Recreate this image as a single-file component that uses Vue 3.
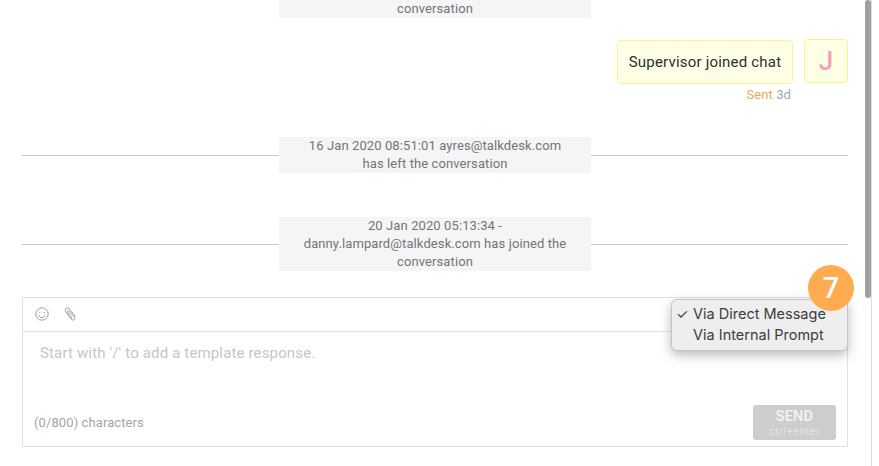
<script setup>
const notices = [
  { id: 1, lines: '16 Jan 2020 08:51:01 ayres@talkdesk.com has left the conversation' },
  { id: 2, lines: '20 Jan 2020 05:13:34 - danny.lampard@talkdesk.com has joined the conversation' }
]
</script>

<template>
  <div class="page">
    <main class="chat">
      <div class="feed">
        <div class="clip">
          <div class="notice first"><span class="notice-text">conversation</span></div>
        </div>

        <div class="message">
          <div class="message-body">
            <div class="bubble">Supervisor joined chat</div>
            <div class="meta"><span class="sent">Sent</span> <span class="age">3d</span></div>
          </div>
          <div class="avatar">J</div>
        </div>

        <div v-for="n in notices" :key="n.id" class="notice">
          <span class="notice-text">{{ n.lines }}</span>
        </div>
      </div>

      <section class="composer">
        <div class="toolbar">
          <svg class="icon" width="16" height="16" viewBox="0 0 16 16" fill="none" stroke="#999" stroke-width="1">
            <circle cx="8" cy="8" r="6.2" />
            <circle cx="5.8" cy="6.4" r="0.7" fill="#999" stroke="none" />
            <circle cx="10.2" cy="6.4" r="0.7" fill="#999" stroke="none" />
            <path d="M4.8 9.4c.7 1.5 1.9 2.2 3.2 2.2s2.5-.7 3.2-2.2" stroke-linecap="round" />
          </svg>
          <svg class="icon" width="16" height="16" viewBox="0 0 16 16" fill="none" stroke="#b5b5b5" stroke-width="1.1" stroke-linecap="round">
            <path d="M13.2 10.4 7.4 2.9c-.9-1.100-2.300-1.200-3.300-.4-1 .8-1.100 2.200-.3 3.300l5.700 7.400c.7.900 1.800 1 2.600.4.800-.6.900-1.700.2-2.600L7.200 5.300c-.4-.5-1-.6-1.500-.2-.5.4-.5 1-.1 1.500l4.300 5.600" />
          </svg>
        </div>
        <div class="editor">
          <div class="placeholder">Start with '/' to add a template response.</div>
          <div class="editor-foot">
            <span class="count">(0/800) characters</span>
            <button class="send" type="button" disabled>
              <span class="send-label">SEND</span>
              <span class="send-hint">ctrl+enter</span>
            </button>
          </div>
        </div>

        <div class="menu">
          <div class="menu-item"><span class="check">✓</span>Via Direct Message</div>
          <div class="menu-item"><span class="check"></span>Via Internal Prompt</div>
        </div>
        <div class="step">7</div>
      </section>
    </main>

    <div class="scrollbar"><div class="thumb"></div></div>
  </div>
</template>

<style scoped>
.page {
  display: flex;
  width: 879px;
  height: 466px;
  overflow: hidden;
  background: #fff;
  font-family: Roboto, "Liberation Sans", sans-serif;
}
.chat {
  width: 826px;
  margin-left: 22px;
  flex: none;
}
.feed {
  height: 297px;
}
.clip {
  height: 18px;
}
.notice {
  display: flex;
  justify-content: center;
  background: linear-gradient(#c9c9c9, #c9c9c9) center / 100% 1px no-repeat;
}
.notice + .notice {
  margin-top: 44px;
}
.notice-text {
  width: 312px;
  background: #f5f5f5;
  padding: 0 24px;
  box-sizing: border-box;
  color: #72747a;
  font-size: 13px;
  letter-spacing: 0.1px;
  line-height: 18px;
  text-align: center;
}
.first {
  background: none;
}
.message {
  display: flex;
  justify-content: flex-end;
  align-items: flex-start;
  gap: 11px;
  margin-top: 21px;
  height: 98px;
}
.message-body {
  display: flex;
  flex-direction: column;
  align-items: flex-end;
  padding-top: 1px;
}
.bubble {
  box-sizing: border-box;
  width: 176px;
  height: 44px;
  line-height: 42px;
  text-align: center;
  background: #ffffe6;
  border: 1px solid #fdf28e;
  border-radius: 4px;
  color: #2b2f36;
  font-size: 15px;
  letter-spacing: 0.2px;
}
.meta {
  margin-top: 2px;
  padding-right: 2px;
  font-size: 13px;
  letter-spacing: 0.1px;
  line-height: 18px;
}
.sent {
  color: #e9ab4c;
}
.age {
  color: #a1a5b7;
}
.avatar {
  box-sizing: border-box;
  width: 44px;
  height: 44px;
  background: #ffffe6;
  border: 1px solid #fdf28e;
  border-radius: 4px;
  color: #f89fb4;
  font-size: 26px;
  font-weight: 500;
  line-height: 42px;
  text-align: center;
}
.composer {
  position: relative;
  box-sizing: border-box;
  height: 150px;
  border: 1px solid #e3e3e3;
}
.toolbar {
  display: flex;
  align-items: center;
  gap: 12px;
  height: 31px;
  padding: 0 0 2px 11px;
  border-bottom: 1px solid #e3e3e3;
}
.editor {
  display: flex;
  flex-direction: column;
  justify-content: space-between;
  height: 114px;
  padding: 12px 11px 6px 11px;
  box-sizing: border-box;
}
.placeholder {
  padding-left: 6px;
  color: #c6c6c6;
  font-size: 15px;
  letter-spacing: 0.15px;
  line-height: 18px;
}
.editor-foot {
  display: flex;
  justify-content: space-between;
  align-items: center;
}
.count {
  color: #a5a5a5;
  font-size: 13px;
  letter-spacing: 0.1px;
}
.send {
  display: flex;
  flex-direction: column;
  align-items: center;
  justify-content: center;
  gap: 1px;
  width: 83px;
  height: 35px;
  padding: 1px 0 0;
  border: 0;
  border-radius: 3px;
  background: #cdcdcd;
  color: #f4f4f4;
  font-family: inherit;
}
.send-label {
  font-size: 14.5px;
  font-weight: 500;
  letter-spacing: 0.2px;
  line-height: 15px;
}
.send-hint {
  color: #e2e2e2;
  font-size: 11.5px;
  letter-spacing: 0.2px;
  line-height: 13px;
}
.menu {
  position: absolute;
  top: 1px;
  right: -1px;
  box-sizing: border-box;
  width: 177px;
  height: 52px;
  padding: 3px 0 0 0;
  background: #eeeeee;
  border: 1px solid #c4c4c4;
  border-radius: 6px;
  box-shadow: 0 4px 12px rgba(0, 0, 0, 0.28);
  color: #3d3d3d;
  font-family: Inter, Roboto, sans-serif;
  font-size: 14.5px;
  line-height: 21px;
}
.menu-item {
  display: flex;
  white-space: nowrap;
}
.check {
  width: 21px;
  padding-left: 4px;
  box-sizing: border-box;
  font-size: 14px;
}
.step {
  position: absolute;
  top: -33px;
  right: -7px;
  width: 46px;
  height: 46px;
  border-radius: 50%;
  background: #ffab4f;
  color: #fff;
  font-size: 29px;
  font-weight: 500;
  line-height: 46px;
  text-align: center;
}
.scrollbar {
  width: 6px;
  height: 466px;
  margin-left: 17px;
  border-right: 1px solid #dedede;
}
.thumb {
  width: 6px;
  height: 298px;
  border-radius: 3px;
  background: #a0a0a0;
}
</style>
